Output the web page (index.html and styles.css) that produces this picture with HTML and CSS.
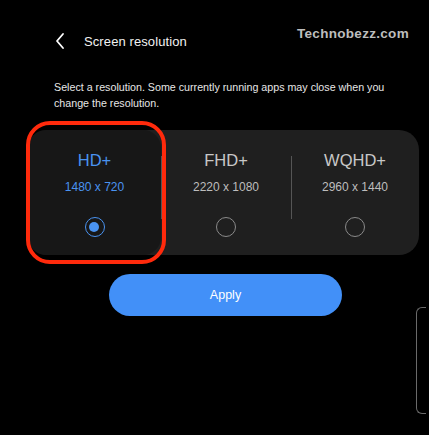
FILE: index.html
```html
<!DOCTYPE html>
<html>
<head>
<meta charset="utf-8">
<link rel="stylesheet" href="styles.css">
</head>
<body>
<div class="screen">
  <header class="header">
    <svg class="back" width="12" height="18" viewBox="0 0 12 18"><path d="M9 2 L3 9 L9 16" fill="none" stroke="#fff" stroke-width="1.8" stroke-linecap="round" stroke-linejoin="round"/></svg>
    <h1 class="title">Screen resolution</h1>
  </header>
  <div class="watermark">Technobezz.com</div>
  <p class="desc">Select a resolution. Some currently running apps may close when you<br>change the resolution.</p>
  <div class="panel">
    <div class="cell selected">
      <div class="name">HD+</div>
      <div class="res">1480 x 720</div>
      <span class="radio on"></span>
    </div>
    <div class="cell divided">
      <div class="name">FHD+</div>
      <div class="res">2220 x 1080</div>
      <span class="radio"></span>
    </div>
    <div class="cell divided">
      <div class="name">WQHD+</div>
      <div class="res">2960 x 1440</div>
      <span class="radio"></span>
    </div>
  </div>
  <div class="actions">
    <button class="apply">Apply</button>
  </div>
  <div class="bracket"></div>
</div>
</body>
</html>
```
FILE: styles.css
```css
*, *::before, *::after { box-sizing: border-box; }
html, body { margin: 0; padding: 0; background: #000; }
body { width: 429px; height: 435px; overflow: hidden; font-family: "Liberation Sans", Arial, sans-serif; color: #fff; }
.screen { position: relative; width: 429px; height: 435px; padding-top: 31px; }
.header { display: flex; align-items: center; height: 20px; padding-left: 54px; }
.back { display: block; }
.title { margin: 0 0 0 18px; font-size: 13px; font-weight: normal; color: #f2f2f2; letter-spacing: 0.1px; }
.watermark { position: absolute; left: 297px; top: 26px; font-size: 13.5px; font-weight: bold; color: #bdbdbd; letter-spacing: 0.3px; }
.desc { margin: 28px 0 0 54px; font-size: 10.7px; line-height: 16px; color: #e6e6e6; }
.panel { margin: 19px 0 0 28px; width: 391px; height: 125px; background: #1f1f1f; border-radius: 20px; display: grid; grid-template-columns: 133px 130px 128px; }
.cell { position: relative; display: flex; flex-direction: column; align-items: center; padding-top: 20px; }
.cell.divided::before { content: ""; position: absolute; left: 0; top: 26px; height: 63px; width: 1px; background: #555; }
.cell.selected { background: #171717; border-radius: 18px; }
.cell.selected::after { content: ""; position: absolute; left: -2px; top: -9px; width: 140px; height: 143px; border: 4px solid #ff2a0c; border-radius: 24px; }
.name { font-size: 16.5px; color: #c8c8c8; line-height: 20px; }
.res { margin-top: 10px; font-size: 12px; color: #bdbdbd; line-height: 15px; }
.selected .name, .selected .res { color: #4a93f0; }
.radio { margin-top: 22px; width: 20px; height: 20px; border-radius: 50%; border: 1.5px solid #8a8a8a; position: relative; }
.radio.on { border-color: #4a93f0; }
.radio.on::after { content: ""; position: absolute; left: 3.5px; top: 3.5px; width: 10px; height: 10px; border-radius: 50%; background: #4a93f0; }
.actions { margin: 19px 0 0 109px; }
.apply { width: 233px; height: 42px; border: none; border-radius: 21px; background: #4290f8; color: #fff; font-family: "Liberation Sans", Arial, sans-serif; font-size: 12.5px; }
.bracket { position: absolute; left: 416px; top: 307px; width: 10px; height: 107px; border: 1.5px solid #6a6a6a; border-right: none; border-radius: 6px 0 0 6px; }
```
